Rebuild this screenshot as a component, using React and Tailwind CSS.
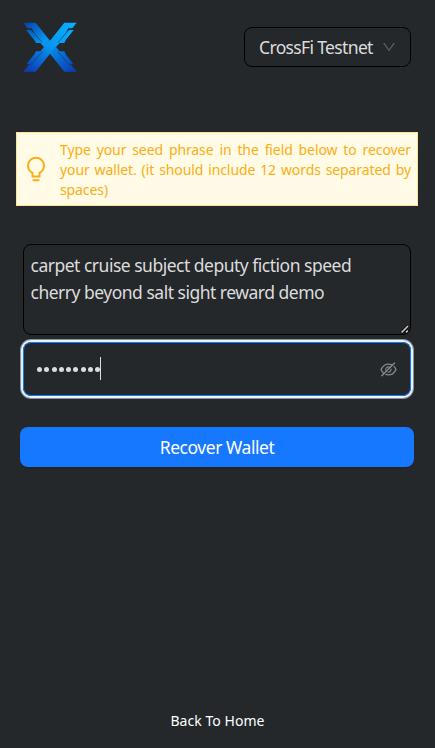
import { AiOutlineBulb, AiOutlineDown, AiOutlineEyeInvisible } from "react-icons/ai";

function Logo({ className }) {
  return (
    <svg className={className} viewBox="41 35 162 150" aria-label="CrossFi">
      <defs>
        <linearGradient id="fall" x1="45" y1="36" x2="190" y2="184" gradientUnits="userSpaceOnUse">
          <stop offset="0" stopColor="#083fa5" />
          <stop offset=".4" stopColor="#0798f2" />
          <stop offset=".55" stopColor="#0789ea" />
          <stop offset="1" stopColor="#0c3caf" />
        </linearGradient>
        <linearGradient id="rise" x1="190" y1="36" x2="65" y2="184" gradientUnits="userSpaceOnUse">
          <stop offset="0" stopColor="#05b0ff" />
          <stop offset=".5" stopColor="#0798f2" />
          <stop offset="1" stopColor="#0b3fb5" />
        </linearGradient>
      </defs>
      <path fill="url(#fall)" d="M42 37H79L122 91L136 110L167 148L177 154L191 170L203 184H165L122 130L108 110L76 70L67 54H55Z" />
      <path fill="url(#rise)" d="M202 37H165L122 91L108 110L77 148L67 154L53 170L42 184H79L122 130L136 110L168 70L177 54H189Z" />
      <path fill="url(#fall)" d="M50 59H65L78 73L112 110H104L93 98H80L74 88Z" />
      <path fill="url(#fall)" d="M132 110H140L151 123H165L170 133L192 161H177L166 147Z" />
      <path fill="url(#rise)" d="M193 59H178L166 73L132 110H140L151 98H165L170 88Z" />
      <path fill="url(#rise)" d="M112 110H104L93 123H80L74 133L51 161H66L78 147Z" />
      <path fill="none" stroke="#123c68" strokeOpacity=".85" strokeWidth="2" d="M52 57H65L75 70L99 97M192 57H179L169 70L145 97M99 124L75 151L66 162H52M145 124L169 151L178 162H192" />
    </svg>
  );
}

export default function App() {
  return (
    <main className="flex h-[748px] w-full flex-col overflow-hidden bg-[#24282b] font-['Noto_Sans','Open_Sans',sans-serif] text-[#dcdcdc]">
      <header className="flex h-[132px] items-start justify-between pt-[22px] pr-6 pl-[23px]">
        <Logo className="h-[50px] w-[54px]" />
        <button className="mt-[5px] flex h-10 w-[167px] items-center justify-between rounded-lg border border-black pr-[13px] pl-3.5 text-[17.5px] tracking-[-0.65px]">
          <span className="whitespace-nowrap">CrossFi Testnet</span>
          <AiOutlineDown className="size-4 text-[#5b5e60]" />
        </button>
      </header>

      <section className="mr-[17px] ml-4 flex h-[74px] items-center border border-[#ffe58f] bg-[#fffbe6] pr-1.5 pl-[4.5px] text-[#faad14]">
        <AiOutlineBulb className="size-7 shrink-0" />
        <p className="ml-[10.5px] flex-1 pt-0.5 text-justify text-[14px] leading-5 tracking-[-0.1px]">
          Type your seed phrase in the field below to recover your wallet. (it should include 12 words separated by spaces)
        </p>
      </section>

      <form className="mt-[38px] flex flex-col pr-[21px] pl-5">
        <div className="relative mr-[3px] ml-[3px] h-[91px] rounded-lg border border-black px-[6.5px] pt-[7px] text-[17.5px] leading-[27px] tracking-[-0.5px]">
          <p className="whitespace-nowrap">carpet cruise subject deputy fiction speed</p>
          <p className="whitespace-nowrap">cherry beyond salt sight reward demo</p>
          <svg className="absolute right-0 bottom-0 size-2.5" viewBox="0 0 10 10" fill="none">
            <path d="M1 9L8 2M5.5 9.5L9 6" stroke="#050505" strokeWidth="3" />
            <path d="M1.5 8.5L8 2M6 8.5L8 6.5" stroke="#c8c8c8" strokeWidth="1.6" />
          </svg>
        </div>
        <div className="mx-[3px] mt-[7px] flex h-[54px] items-center rounded-lg border border-[#1677ff] pr-3 pl-[13px] shadow-[0_0_0_2px_#e6f4ff,0_0_0_3px_#8b9299]">
          <div className="mt-px flex items-center gap-[2.25px]">
            {Array.from({ length: 9 }, (_, i) => (
              <span key={i} className="size-[5px] rounded-full bg-[#dcdcdc]" />
            ))}
          </div>
          <span className="-mt-0.5 h-[23px] w-px bg-[#dcdcdc]" />
          <AiOutlineEyeInvisible className="ml-auto size-[19px] text-[#858789]" />
        </div>
        <button className="mt-[31px] h-10 rounded-lg bg-[#1677ff] text-[17.5px] tracking-[-0.45px] text-white shadow-[0_2px_0_rgba(5,5,5,0.1)]">
          Recover Wallet
        </button>
      </form>

      <a className="mt-auto mb-[17px] self-center text-[14px] leading-5 tracking-[0.05px] text-white">Back To Home</a>
    </main>
  );
}
